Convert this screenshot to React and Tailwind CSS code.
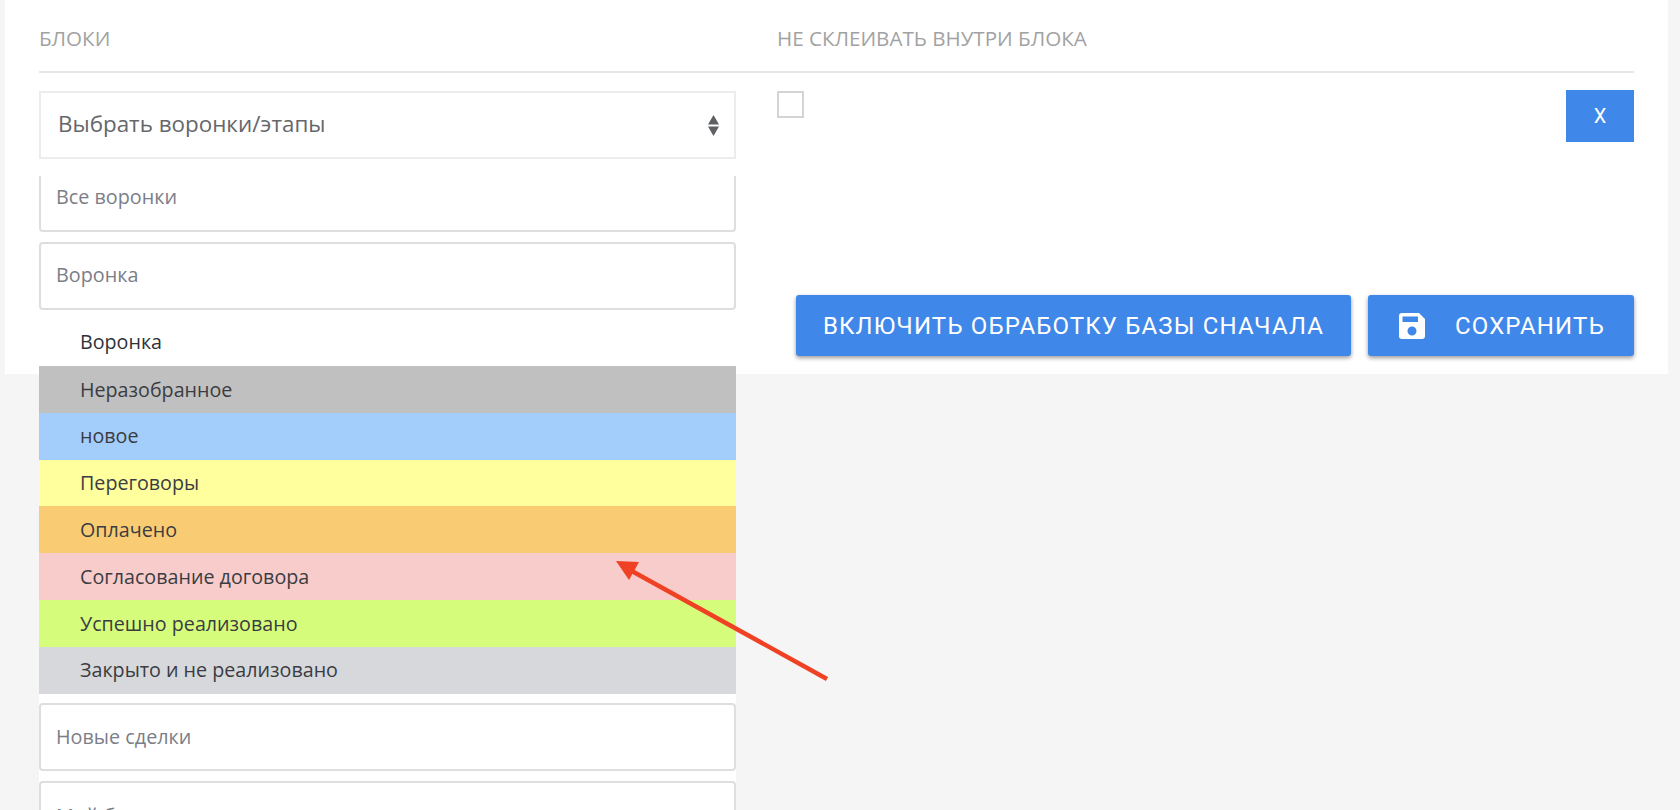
const stages = [
  ["Неразобранное", "bg-[#c0c0c0]"],
  ["новое", "bg-[#a3cdfb]"],
  ["Переговоры", "bg-[#ffff9e]"],
  ["Оплачено", "bg-[#f9cc74]"],
  ["Согласование договора", "bg-[#f7cccb]"],
  ["Успешно реализовано", "bg-[#d6fc7c]"],
  ["Закрыто и не реализовано", "bg-[#d7d8db]"],
];

function Field({ children, className }) {
  return (
    <div className={"h-[68px] rounded-[4px] border-2 border-[#dedede] bg-white px-[15px] text-[19.8px] leading-[26px] text-[#7b7e88] " + className}>
      {children}
    </div>
  );
}

function Btn({ children, className }) {
  return (
    <div className={"flex h-[61px] items-center rounded-[3px] bg-[#3f87e8] text-[24px] tracking-[1.15px] text-white shadow-[0_2px_4px_rgba(0,0,0,0.4)] " + className} style={{ fontFamily: "Roboto, sans-serif" }}>
      {children}
    </div>
  );
}

export default function App() {
  return (
    <div className="relative h-[810px] overflow-hidden bg-[#f5f5f5] pl-[5px]" style={{ fontFamily: '"Open Sans", "Noto Sans", sans-serif' }}>
      <div className="h-[374px] w-[1663px] bg-white px-[34px]">
        <div className="flex h-[73px] items-start border-b-2 border-[#e6e6e6] pt-[26px] text-[20.6px] leading-[24px] text-[#a2a2a2]">
          <div className="w-[738px]">БЛОКИ</div>
          <div>НЕ СКЛЕИВАТЬ ВНУТРИ БЛОКА</div>
        </div>
        <div className="flex pt-[17px]">
          <div className="mr-[41px] w-[697px] shrink-0 pt-px">
            <div className="flex h-[68px] items-center justify-between border-2 border-[#ececec] bg-white pl-[17px] pr-[15px] text-[22.4px] text-[#65676b]">
              <span className="pb-[2px]">Выбрать воронки/этапы</span>
              <svg width="11" height="21" viewBox="0 0 12 22" preserveAspectRatio="none" className="fill-[#5f6063]">
                <path d="M6 0 L12 10 H0 Z" />
                <path d="M6 22 L12 12 H0 Z" />
              </svg>
            </div>
            <div className="h-[17px]" />
            <div className="bg-white pb-[40px]">
              <div className="h-[56px] rounded-b-[4px] border-x-2 border-b-2 border-[#dedede] bg-white px-[15px] pt-[8px] text-[19.8px] leading-[26px] text-[#7b7e88]">Все воронки</div>
              <Field className="mt-[10px] pt-[18px]">Воронка</Field>
              <div className="flex h-[56px] items-center pl-[41px] pt-[8px] text-[19.7px] text-[#2f3238]">Воронка</div>
              {stages.map(([t, c]) => (
                <div key={t} className={"flex h-[46.8px] items-center pl-[41px] text-[19.7px] text-[#3a3c42] " + c}>{t}</div>
              ))}
              <Field className="mt-[9px] pt-[19px]">Новые сделки</Field>
              <Field className="mt-[10px] pt-[20px]">Мой блок</Field>
            </div>
          </div>
          <div className="flex-1">
            <div className="flex items-start justify-between">
              <div className="mt-[1px] h-[27px] w-[27px] border-2 border-[#d4d4d4] bg-white" />
              <div className="flex h-[52px] w-[68px] items-center justify-center bg-[#3f87e8] text-[20px] text-white" style={{ fontFamily: "Roboto, sans-serif" }}>X</div>
            </div>
            <div className="mt-[153px] flex justify-end gap-[17px]">
              <Btn className="w-[555px] justify-center">ВКЛЮЧИТЬ ОБРАБОТКУ БАЗЫ СНАЧАЛА</Btn>
              <Btn className="w-[266px] pl-[31px]">
                <svg width="26" height="26" viewBox="0 0 26 26" className="fill-white">
                  <path fillRule="evenodd" d="M3 0 H20 L26 6 V23 A3 3 0 0 1 23 26 H3 A3 3 0 0 1 0 23 V3 A3 3 0 0 1 3 0 Z M3.500 3.500 V9 H19 V3.500 Z M13 13.500 A4.500 4.500 0 1 0 13 22.500 A4.500 4.500 0 1 0 13 13.500 Z" />
                </svg>
                <span className="ml-[30px]">СОХРАНИТЬ</span>
              </Btn>
            </div>
          </div>
        </div>
      </div>
      <svg className="pointer-events-none absolute left-0 top-0" width="1680" height="810" viewBox="0 0 1680 810">
        <line x1="827" y1="679" x2="630" y2="570" stroke="#ef4123" strokeWidth="4.500" />
        <path d="M616 561 L639 562 L629 580 Z" fill="#ef4123" />
      </svg>
    </div>
  );
}
